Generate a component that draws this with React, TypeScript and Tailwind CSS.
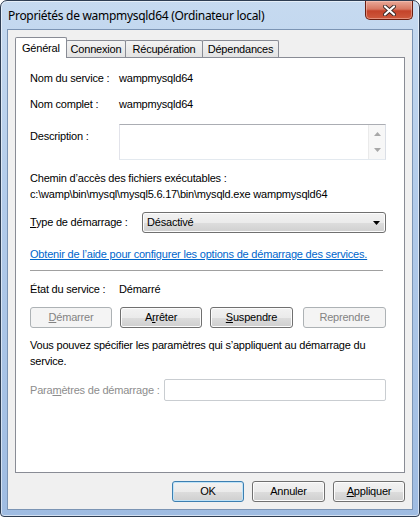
import React from "react";

const btn =
  "h-[21px] rounded-[3px] border border-[#707070] bg-[linear-gradient(#f2f2f2_0%,#ebebeb_50%,#dddddd_51%,#cfcfcf_100%)] shadow-[inset_0_0_0_1px_#fcfcfc] flex items-center justify-center text-black";
const btnDisabled =
  "h-[21px] rounded-[3px] border border-[#adb2b5] bg-[#f4f4f4] flex items-center justify-center text-[#838383]";

function Row({ children, className = "" }: { children: React.ReactNode; className?: string }) {
  return <div className={"flex items-center " + className}>{children}</div>;
}

export default function App() {
  return (
    <div
      className="w-[420px] h-[517px] bg-white"
      style={{ fontFamily: '"Liberation Sans", Arial, sans-serif' }}
    >
      <div className="w-full h-full flex flex-col rounded-t-[7px] rounded-b-[4px] border border-[#2e3d52] bg-[linear-gradient(180deg,#c6daf0_0%,#b2cbea_40%,#9fbce2_100%)] shadow-[inset_0_0_0_1px_rgba(255,255,255,0.55)] overflow-hidden">
        {/* Title bar */}
        <div className="h-[28px] shrink-0 flex items-start">
          <div
            className="pl-[7px] pt-[7px] text-[12px] leading-[16px] tracking-[-0.3px] text-black"
            style={{ fontFamily: '"Noto Sans", "Open Sans", sans-serif' }}
          >
            Propriétés de wampmysqld64 (Ordinateur local)
          </div>
          <div className="ml-auto mr-[6px] w-[48px] h-[19px] rounded-b-[5px] border border-t-0 border-[#6b1e10] bg-[linear-gradient(180deg,#e9a999_0%,#d77862_45%,#c4432a_55%,#cf5a3e_100%)] shadow-[inset_0_0_0_1px_rgba(255,210,200,0.45)] flex items-center justify-center">
            <svg width="13" height="11" viewBox="0 0 13 11">
              <path d="M2 1.5 L11 9.5 M11 1.5 L2 9.5" stroke="#3a2a28" strokeWidth="4" strokeLinecap="round" />
              <path d="M2 1.5 L11 9.5 M11 1.5 L2 9.5" stroke="#ffffff" strokeWidth="2.2" strokeLinecap="round" />
            </svg>
          </div>
        </div>

        {/* Client area */}
        <div className="flex-1 mx-[6px] mb-[6px] border border-[#7b94b4] bg-[#f0f0f0] flex flex-col px-[7px] pt-[7px] pb-[7px] text-[11px] tracking-[-0.2px] text-black">
          {/* Tabs */}
          <div className="flex items-end h-[20px]">
            <div className="relative z-10 w-[52px] h-[21px] mb-[-1px] bg-white border border-b-0 border-[#898c95] rounded-t-[2px] flex items-start pl-[6px] pt-[4px] leading-[13px]">
              Général
            </div>
            <div className="w-[60px] h-[17px] ml-[-1px] border border-b-0 border-[#898c95] rounded-t-[2px] bg-[linear-gradient(#f3f3f3,#e3e3e3)] flex items-center justify-center leading-[13px]">
              Connexion
            </div>
            <div className="w-[78px] h-[17px] ml-[-1px] border border-b-0 border-[#898c95] rounded-t-[2px] bg-[linear-gradient(#f3f3f3,#e3e3e3)] flex items-center justify-center leading-[13px]">
              Récupération
            </div>
            <div className="w-[77px] h-[17px] ml-[-1px] border border-b-0 border-[#898c95] rounded-t-[2px] bg-[linear-gradient(#f3f3f3,#e3e3e3)] flex items-center justify-center leading-[13px]">
              Dépendances
            </div>
          </div>

          {/* Panel */}
          <div className="flex-1 border border-[#898c95] bg-white pl-[14px] pr-[18px] flex flex-col leading-[13px]">
            <Row className="mt-[14px] h-[13px]">
              <div className="w-[89px] shrink-0">Nom du service :</div>
              <div>wampmysqld64</div>
            </Row>
            <Row className="mt-[13px] h-[13px]">
              <div className="w-[89px] shrink-0">Nom complet :</div>
              <div>wampmysqld64</div>
            </Row>
            <div className="mt-[13px] flex items-start">
              <div className="w-[89px] shrink-0 pt-[6px]">Description :</div>
              <div className="flex-1 h-[36px] border border-[#abadb3] border-l-[#e2e3ea] border-r-[#dbdfe6] border-b-[#e3e9ef] bg-white flex justify-end">
                <div className="w-[17px] h-full bg-[#f7f7f7] border-l border-[#eaeaea] flex flex-col items-center justify-between py-[7px]">
                  <svg width="7" height="4" viewBox="0 0 7 4">
                    <path d="M0 4 L3.5 0 L7 4 Z" fill="#a8a8a8" />
                  </svg>
                  <svg width="7" height="4" viewBox="0 0 7 4">
                    <path d="M0 0 L7 0 L3.5 4 Z" fill="#a8a8a8" />
                  </svg>
                </div>
              </div>
            </div>
            <div className="mt-[10px] leading-[16px]">Chemin d’accès des fichiers exécutables :</div>
            <div className="leading-[16px]">c:\wamp\bin\mysql\mysql5.6.17\bin\mysqld.exe wampmysqld64</div>
            <Row className="mt-[10px]">
              <div className="w-[112px] shrink-0">
                <span className="underline">T</span>ype de démarrage :
              </div>
              <div className="flex-1 h-[21px] rounded-[3px] border border-[#707070] bg-[linear-gradient(#f2f2f2_0%,#ebebeb_50%,#dddddd_51%,#cfcfcf_100%)] shadow-[inset_0_0_0_1px_#fcfcfc] flex items-center pl-[4px] pr-[5px]">
                <span className="flex-1">Désactivé</span>
                <svg width="7" height="4" viewBox="0 0 7 4">
                  <path d="M0 0 L7 0 L3.5 4 Z" fill="#000" />
                </svg>
              </div>
            </Row>
            <div className="mt-[15px] h-[13px] text-[#0066cc] underline">
              Obtenir de l’aide pour configurer les options de démarrage des services.
            </div>
            <div className="mt-[9px] mr-[3px] h-[2px] border-t border-[#a0a0a0] border-b border-b-white" />
            <Row className="mt-[11px] h-[13px]">
              <div className="w-[89px] shrink-0">État du service :</div>
              <div>Démarré</div>
            </Row>
            <div className="mt-[11px] flex">
              <div className={btnDisabled + " w-[82px]"}>
                <span className="underline">D</span>émarrer
              </div>
              <div className={btn + " w-[82px] ml-[8px]"}>
                A<span className="underline">r</span>rêter
              </div>
              <div className={btn + " w-[83px] ml-[8px]"}>
                <span className="underline">S</span>uspendre
              </div>
              <div className={btnDisabled + " w-[83px] ml-[10px]"}>Reprendre</div>
            </div>
            <div className="mt-[9px] leading-[16px]">
              Vous pouvez spécifier les paramètres qui s’appliquent au démarrage du service.
            </div>
            <Row className="mt-[10px]">
              <div className="w-[134px] shrink-0 text-[#8d8d8d]">
                Para<span className="underline">m</span>ètres de démarrage :
              </div>
              <div className="flex-1 h-[22px] rounded-[2px] border border-[#c9cdd1] bg-white" />
            </Row>
          </div>

          {/* Bottom buttons */}
          <div className="mt-[8px] flex justify-end gap-[8px]">
            <div className="w-[72px] h-[21px] rounded-[3px] border border-[#3c7fb1] bg-[linear-gradient(#f2f2f2_0%,#ebebeb_50%,#dddddd_51%,#cfcfcf_100%)] shadow-[inset_0_0_0_1px_#bfe3f8] flex items-center justify-center">
              OK
            </div>
            <div className={btn + " w-[73px]"}>Annuler</div>
            <div className={btn + " w-[72px]"}>
              <span className="underline">A</span>ppliquer
            </div>
          </div>
        </div>
      </div>
    </div>
  );
}
